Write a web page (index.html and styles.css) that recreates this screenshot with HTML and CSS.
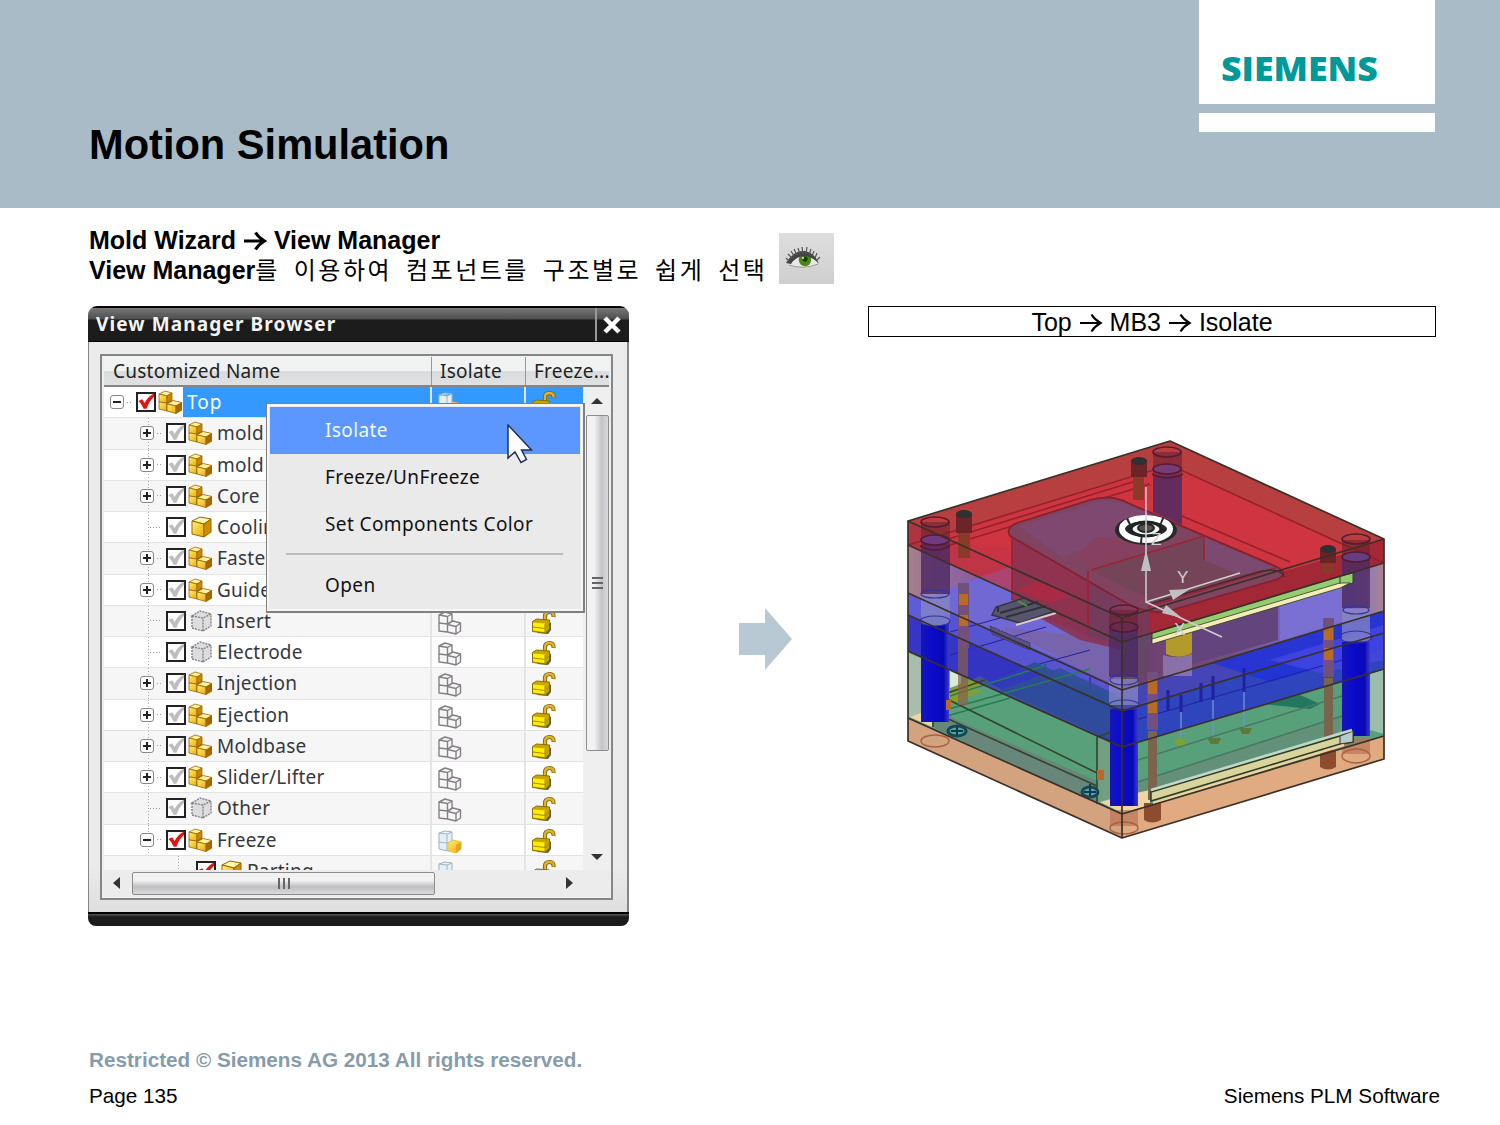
FILE: index.html
```html
<!DOCTYPE html>
<html lang="ko">
<head>
    <meta charset="UTF-8">
    <meta name="viewport" content="width=device-width, initial-scale=1.0">
    <title>Motion Simulation</title>
    <link rel="stylesheet" href="styles.css">
</head>
<body>
    <svg class="defs" width="0" height="0">
        <defs>
            <linearGradient id="gold" x1="0" y1="0" x2="1" y2="1">
                <stop offset="0" stop-color="#fff27a"/>
                <stop offset="1" stop-color="#eda800"/>
            </linearGradient>
        </defs>
        <symbol id="check" viewBox="0 0 20 20">
            <path d="M1.500 9.500 L5.500 7.500 L8 11.500 Q12 4 18 1.500 L18 5 Q12.500 10 10 17.500 L7 17.500 Q5 12.500 1.500 9.500Z"/>
        </symbol>
        <symbol id="boxes" viewBox="0 0 24 24">
            <g stroke="#9a6500" stroke-width=".8" stroke-linejoin="round">
                <path fill="#fff3a0" d="M1 4 L7 1 L14 3 L9 6Z"/>
                <path fill="url(#gold)" d="M1 4 L9 6 V13 L1 12Z"/>
                <path fill="#c98800" d="M9 6 L14 3 V10 L9 13Z"/>
                <path fill="url(#gold)" d="M1 12 L9 13 V21 L1 19Z"/>
                <path fill="#b97800" d="M9 13 L14 10 V18 L9 21Z"/>
                <path fill="#fff3a0" d="M9 14 L15 10.500 L24 12.500 L18 16Z"/>
                <path fill="url(#gold)" d="M9 14 L18 16 V23.500 L9 21Z"/>
                <path fill="#a86800" d="M18 16 L24 12.500 V20 L18 23.500Z"/>
            </g>
        </symbol>
        <symbol id="box" viewBox="0 0 24 24">
            <g stroke="#9a6500" stroke-width="1" stroke-linejoin="round">
                <path fill="#fff6b0" d="M4 6 L12 2 L23 4 L16 9Z"/>
                <path fill="url(#gold)" d="M4 6 L16 9 V22 L4 19Z"/>
                <path fill="#d08d00" d="M16 9 L23 4 V17 L16 22Z"/>
            </g>
        </symbol>
        <symbol id="empty" viewBox="0 0 24 24">
            <path fill="#dddcde" d="M4 7 L12 2 L23 5 V17 L15 22 L4 19Z"/>
            <path fill="none" stroke="#858287" stroke-width="1.4" stroke-dasharray="2 1" d="M4 7 L12 2 L23 5 L15 9Z M4 7 V19 L15 22 V9 M15 22 L23 17 V5"/>
        </symbol>
        <symbol id="outline" viewBox="0 0 24 24">
            <path fill="#f7f6f7" stroke="#858086" stroke-width="1.400" stroke-linejoin="round" d="M1 4 L7 1 L14 3 L9.500 5.500Z M1 4 L9.500 5.500 V13 L1 12Z M9.500 5.500 L14 3 V10 L9.500 13Z M1 12 L9.500 13 V21 L1 20Z M9.500 13.500 L15 10 L22.500 12 L18 15.500Z M9.500 13.500 L18 15.500 V23 L9.500 21Z M18 15.500 L22.500 12 V20 L18 23Z"/>
        </symbol>
        <symbol id="isolated" viewBox="0 0 24 24">
            <path fill="#e2f0f6" stroke="#9fb4bf" d="M1 3 L7 1 L14 2 V18 L9 21 L1 19Z M1 3 L9 4 L14 2 M9 4 V21 M1 12 L9 13 L14 11"/>
            <path fill="url(#gold)" stroke="#eebd45" d="M10 13 L15 10 L23 12 V19 L18 23 L10 21Z"/>
            <path fill="#e9a41d" d="M18 15 L23 12 V19 L18 23Z"/>
        </symbol>
        <symbol id="lock" viewBox="0 0 26 26">
            <path fill="none" stroke="#7d6200" stroke-width="4.200" d="M14 13 V7 Q14 3 18.500 3 Q23 3 22.500 8"/>
            <path fill="none" stroke="#dfb32f" stroke-width="2.400" d="M14 13 V7 Q14 3 18.500 3 Q23 3 22.500 7.500"/>
            <path fill="#5c5b4c" d="M6 24 L17 25 L20 21 V14 L17 12Z"/>
            <path fill="#c9a500" stroke="#8a7000" d="M1.500 12.500 L5.500 10 L18.500 11 V20 L14.500 24 L1.500 22.500Z"/>
            <path fill="#ffef00" d="M2 13.500 L14 14.500 V23 L2 21.500Z"/>
            <path stroke="#a88c00" d="M2 18 L14 19.500 L18 16 M14 15 V24" fill="none"/>
        </symbol>
        <symbol id="to" viewBox="0 0 24 20">
            <path fill="none" stroke="currentColor" d="M1 10 H21 M12.500 1.500 Q15.500 6.500 21.500 10 Q15.500 13.500 12.500 18.500"/>
        </symbol>
    </svg>

    <header class="banner">
        <h1>Motion Simulation</h1>
        <div class="brand">
            <div class="logo"><span>SIEMENS</span></div>
            <div class="logo-bar"></div>
        </div>
    </header>

    <main>
        <section class="intro">
            <div class="intro-text">
                <p>Mold Wizard <svg class="to bold"><use href="#to"/></svg> View Manager</p>
                <p>View Manager<span class="korean">를 이용하여 컴포넌트를 구조별로 쉽게 선택</span></p>
            </div>
            <div class="eye">
                <svg width="55" height="51" viewBox="0 0 55 51">
                    <path d="M8 31 Q16 21 26 21 Q35 21 40 30 Q34 35 25 34 Q15 34 8 31Z" fill="#e8e8e8"/>
                    <path d="M10 32 Q24 37 39 31" fill="none" stroke="#999"/>
                    <circle cx="26" cy="27" r="6.200" fill="#4d8718"/>
                    <circle cx="26" cy="26" r="2.600" fill="#1c3a0a"/>
                    <circle cx="24" cy="25" r="1" fill="#dfe"/>
                    <path d="M7 30 Q15 17 26 18 Q36 20 40 31 Q34 24 26 23 Q17 23 12 31Z" fill="#444"/>
                    <path d="M10 28 L7 25 M13 25 L9 21 M15 23 L12 18 M18 22 L15 16 M21 21 L19 15 M24 21 L23 14 M27 21 L28 14 M30 22 L32 16 M33 23 L35 18 M36 25 L38 20 M38 27 L41 24" stroke="#555" stroke-width="1.200"/>
                </svg>
            </div>
        </section>

        <section class="stage">
            <div class="dialog">
                <div class="titlebar">
                    <span>View Manager Browser</span>
                    <div class="close">
                        <svg width="20" height="20" viewBox="0 0 20 20"><path d="M3 3 L17 17 M17 3 L3 17" stroke="#fff" stroke-width="4.500"/></svg>
                    </div>
                </div>
                <div class="dialog-body">
                    <div class="panel">
                        <div class="thead">
                            <div class="col-name">Customized Name</div>
                            <div class="col-isolate">Isolate</div>
                            <div class="col-freeze">Freeze...</div>
                        </div>
                        <div class="scroll-area">
                            <div class="rows" id="rows"></div>
                            <div class="vscroll">
                                <svg width="12" height="6"><path d="M0 6 L6 0 L12 6Z" fill="#333"/></svg>
                                <div class="vthumb"><i></i><i></i><i></i></div>
                                <svg width="12" height="6"><path d="M0 0 L6 6 L12 0Z" fill="#333"/></svg>
                            </div>
                        </div>
                        <div class="hscroll">
                            <svg width="7" height="12"><path d="M7 0 L0 6 L7 12Z" fill="#333"/></svg>
                            <div class="hthumb"><i></i><i></i><i></i></div>
                            <svg width="7" height="12"><path d="M0 0 L7 6 L0 12Z" fill="#333"/></svg>
                        </div>
                    </div>
                </div>
                <div class="dialog-foot"></div>

                <div class="menu">
                    <div class="menu-item active">Isolate</div>
                    <div class="menu-item">Freeze/UnFreeze</div>
                    <div class="menu-item">Set Components Color</div>
                    <hr>
                    <div class="menu-item">Open</div>
                </div>
                <svg class="pointer" width="28" height="42" viewBox="0 0 28 42">
                    <path d="M2 1 V34 L9 28 L15 38.500 L20.500 35.500 L15.500 26 H25.500Z" fill="#fff" stroke="#20305a" stroke-width="1.500"/>
                </svg>
            </div>

            <svg class="arrow" width="53" height="62" viewBox="0 0 53 62"><path d="M0 15 H26 V0 L53 31 L26 62 V47 H0Z" fill="#b9c9d4"/></svg>

            <div class="result">
                <div class="caption">Top <svg class="to"><use href="#to"/></svg> MB3 <svg class="to"><use href="#to"/></svg> Isolate</div>
                <svg class="model" width="490" height="410" viewBox="900 435 490 410">
                    <defs>
                        <linearGradient id="pillar">
                            <stop offset="0" stop-color="#1616b4"/>
                            <stop offset=".3" stop-color="#0c0ccc"/>
                            <stop offset=".8" stop-color="#0808b8"/>
                            <stop offset="1" stop-color="#3c3cc8"/>
                        </linearGradient>
                        <linearGradient id="leftMid" gradientUnits="userSpaceOnUse" x1="908" y1="0" x2="1122" y2="0">
                            <stop offset="0" stop-color="#a8808e"/>
                            <stop offset=".2" stop-color="#9168a0"/>
                            <stop offset=".45" stop-color="#8a4f92"/>
                            <stop offset=".7" stop-color="#8c3560"/>
                            <stop offset="1" stop-color="#67365f"/>
                        </linearGradient>
                        <linearGradient id="rightMid" gradientUnits="userSpaceOnUse" x1="1122" y1="0" x2="1384" y2="0">
                            <stop offset="0" stop-color="#6b3d70"/>
                            <stop offset=".4" stop-color="#735078"/>
                            <stop offset=".6" stop-color="#7a62b4"/>
                            <stop offset=".88" stop-color="#7d70c4"/>
                            <stop offset="1" stop-color="#aa8494"/>
                        </linearGradient>
                    </defs>

                    <!-- plate side faces, top to bottom -->
                    <path fill="#ae3442" d="M908 521 L1122 618 V642 L908 545Z"/>
                    <path fill="#a52637" d="M1122 618 L1384 539 V563 L1122 642Z"/>
                    <path fill="url(#leftMid)" d="M908 545 L1122 642 V690 L908 593Z"/>
                    <path fill="url(#rightMid)" d="M1122 642 L1384 563 V611 L1122 690Z"/>
                    <path fill="#5f5cd8" d="M908 593 L1122 690 V711 L908 615Z"/>
                    <path fill="#4645b6" d="M1122 690 L1384 611 V633 L1122 711Z"/>
                    <path fill="#3535c6" d="M908 615 L1122 711 V747 L908 651Z"/>
                    <path fill="#2e45bd" d="M1122 711 L1384 633 V669 L1122 747Z"/>
                    <path fill="#58a079" d="M908 651 L1122 747 V814 L908 718Z"/>
                    <path fill="#57a079" d="M1122 747 L1384 669 V736 L1122 814Z"/>
                    <path fill="#d3a27f" d="M908 718 L1122 814 V838 L908 741Z"/>
                    <path fill="#e0ab80" d="M1122 814 L1384 736 V759 L1122 838Z"/>

                    <!-- inside of the blue plates -->
                    <path fill="#7069d4" d="M958 585 L1012 566 V605 L1122 650 V690 L925 601Z"/>
                    <path fill="#5452ce" opacity=".8" d="M945 610 L1050 655 L1122 688 V711 L940 629Z"/>
                    <path fill="#7b63a2" opacity=".8" d="M1000 627 L1122 640 V690Z"/>
                    <path fill="#1c2fe0" opacity=".7" d="M1212 663 L1384 611 V650 L1270 682Z"/>
                    <path fill="#4a4ae6" opacity=".7" d="M1270 660 L1384 625 V660 L1320 673Z"/>
                    <path fill="#7a6fd2" d="M1280 597 L1340 580 V622 L1280 641Z"/>
                    <path fill="#64447c" d="M1192 630 L1278 604 V640 L1192 664Z"/>
                    <g fill="none" stroke="#2320a0">
                        <path d="M950 655 L1046 627 M1000 675 L1090 650 M1045 664 V683 M1090 677 V702 M1122 724 L1342 660 M950 632 L1050 604"/>
                        <path stroke-width="3" d="M1168 690 V711 M1181 695 V712 M1201 683 V702 M1213 676 V700 M1244 668 V692"/>
                    </g>

                    <!-- ejector space -->
                    <path fill="#a9bdab" d="M909 653 L932 663 V726 L909 717Z"/>
                    <path fill="#d8ead8" d="M950 671 L961 676 V684 L950 688Z"/>
                    <path fill="#849f30" d="M944 692 L980 676 L996 685 L951 704Z"/>
                    <path fill="#2f4f96" d="M984 684 L1035 662 L1122 703 V742 L1097 737Z"/>
                    <path fill="#58a079" d="M975 688 L986 682 L1100 735 L1097 745Z"/>
                    <path fill="#3434c2" d="M960 640 L1122 711 V747 L960 674Z" opacity=".75"/>
                    <path fill="#2f4f96" d="M1000 690 L1060 668 L1122 697 V745Z" opacity=".85"/>
                    <path fill="#68877b" d="M934 708 L957 720 L1097 781 V803 L934 728Z"/>
                    <path fill="#729f82" d="M1098 738 L1122 747 V808 L1098 802Z"/>
                    <path fill="#678b78" opacity=".75" d="M1122 787 L1340 716 V731 L1151 790 L1122 797Z"/>
                    <path fill="#23765f" d="M1263 704 L1300 695 L1320 704 L1310 709Z"/>
                    <path fill="#9bbdab" d="M1370 674 L1384 669 V734 L1370 730Z"/>
                    <path fill="#efd5a5" d="M1100 802 L1122 796 L1150 790 V805 L1122 813Z M910 717 L932 709 V727Z"/>
                    <g fill="none" stroke="#287b55" stroke-width="1.500">
                        <path d="M950 696 L1047 665 M945 710 L1090 669 M940 718 L1010 698"/>
                        <path stroke="#4b7764" d="M1122 765 L1342 696 M1122 787 L1342 716"/>
                    </g>
                    <path fill="none" stroke="#35442e" stroke-width="1.600" d="M933 661 V727 M1097 737 V804 M943 697 L1097 773 M935 713 L1097 786 M1097 737 L1122 728 M936 697 L985 680"/>
                    <path fill="none" stroke="#6d90d6" stroke-width="2" opacity=".7" d="M1181 712 V738 M1213 700 V735 M1244 692 V727"/>
                    <g fill="#5a7b3b">
                        <ellipse cx="1180" cy="742" rx="6" ry="3.500" fill="#79a338"/>
                        <path d="M1207 738 H1221 L1218 744 H1211Z M1239 728 H1252 L1249 734 H1242Z"/>
                    </g>
                    <g fill="#5d9cac" stroke="#124953" stroke-width="3">
                        <ellipse cx="957" cy="731" rx="9" ry="5"/>
                        <ellipse cx="1090" cy="792" rx="8" ry="5"/>
                    </g>
                    <path stroke="#103d45" stroke-width="2" d="M951 731 H963 M957 727 V735 M1084 792 H1096 M1090 784 V796"/>

                    <!-- top plate -->
                    <path fill="#b83f40" d="M908 521 L1170 441 L1384 539 L1122 618Z"/>
                    <path fill="#ce3541" d="M918 541 L1170 465 L1358 550 L1122 618 L953 542Z"/>
                    <path fill="#c63448" d="M953 543 L1012 548 V592 L935 556Z" opacity=".7"/>
                    <path fill="#a32a36" opacity=".55" d="M1160 612 L1384 544 V563 L1160 630Z"/>
                    <g fill="none" stroke="#94222a" stroke-width="1.600">
                        <path d="M908 545 L1170 465 L1384 563 M945 540 L1139 480 M950 545 L1150 484 M1182 516 L1290 562"/>
                    </g>

                    <!-- cavity block -->
                    <path fill="#8a3352" opacity=".9" d="M1012 538 L1122 587 V650 L1080 640 L1012 603Z"/>
                    <path fill="#6f3d60" opacity=".8" d="M1090 573 L1150 600 V656 L1088 636Z"/>
                    <path fill="#804360" stroke="#85202e" stroke-width="1.700" d="M1010 536 Q1005 528 1017 523 L1090 500 Q1112 494 1128 503 L1275 566 Q1292 574 1275 580 L1165 612 Q1145 613 1128 604Z"/>
                    <path fill="#7d4a74" opacity=".8" d="M1018 526 L1093 503 Q1110 498 1126 504 L1162 520 L1093 546 L1062 557Z"/>
                    <path fill="#874160" d="M1074 555 Q1088 546 1096 537 Q1120 536 1150 546 L1093 570Z"/>
                    <path fill="#744558" d="M1091 570 L1150 552 L1200 537 L1274 570 L1160 603 L1122 586Z"/>
                    <path fill="#7c4a70" d="M1204 537 L1275 568 L1240 575 L1204 560Z"/>
                    <path fill="none" stroke="#9d2335" stroke-width="1.700" d="M1012 538 V600 M1088 571 V630 M1091 570 L1204 536 M1148 607 L1275 568 M1204 537 V560"/>
                    <path fill="none" stroke="#4a2830" stroke-width="1.500" d="M1150 604 L1262 571 Q1282 568 1284 577"/>
                    <path fill="#634765" d="M1122 642 L1150 633 V672 L1122 688Z"/>

                    <!-- slider on the left side -->
                    <path fill="#a92a45" d="M1017 590 L1040 580 L1070 595 L1050 603Z"/>
                    <path fill="#57546c" stroke="#32363a" stroke-width="1.500" d="M992 615 L996 607 L1024 598 L1055 611 L1020 623Z"/>
                    <path fill="none" stroke="#2f3238" stroke-width="2" d="M1000 613 L1038 602 M1006 617 L1046 606 M998 607 V612"/>
                    <path stroke="#dac8cf" stroke-width="2" d="M1016 625 L1056 613"/>
                    <path stroke="#4b9544" stroke-width="2" d="M1018 601 L1027 606"/>
                    <path fill="#584f8b" stroke="#343750" stroke-dasharray="2 1" d="M990 626 L1030 643 V650 L992 634Z"/>

                    <!-- guide pillars -->
                    <g fill="#4d2a64" opacity=".82">
                        <path d="M921 544 H950 V594 H921Z"/>
                        <path d="M1153 475 H1182 V525 L1153 512Z"/>
                        <path d="M1342 558 H1370 V608 H1342Z"/>
                        <path d="M1109 630 H1138 V677 H1109Z"/>
                    </g>
                    <path fill="#6c2030" opacity=".6" d="M921 522 H950 V546 H921Z M1153 452 H1182 V475 H1153Z M1342 540 H1370 V560 H1342Z M1109 610 H1138 V632 H1109Z"/>
                    <g fill="#8787c4" opacity=".75">
                        <path d="M921 594 H950 V620 H921Z"/>
                        <path d="M1342 609 H1370 V641 H1342Z"/>
                        <path d="M1109 679 H1138 V705 H1109Z"/>
                    </g>
                    <g fill="url(#pillar)">
                        <path d="M921 622 H949 V722 H921Z"/>
                        <path d="M1110 709 H1138 V806 H1110Z"/>
                        <path d="M1342 642 H1370 V736 H1342Z"/>
                    </g>
                    <g fill="none" stroke="#551b31" stroke-width="1.600">
                        <ellipse cx="935" cy="522" rx="14" ry="5"/>
                        <ellipse cx="935" cy="540" rx="14" ry="5" fill="#703c7f"/>
                        <ellipse cx="1167" cy="452" rx="14" ry="5"/>
                        <ellipse cx="1167" cy="469" rx="14" ry="5" fill="#773b75"/>
                        <path d="M1152 474 Q1167 482 1183 474 M920 546 Q935 554 950 546"/>
                        <ellipse cx="1356" cy="539" rx="14" ry="5"/>
                        <ellipse cx="1356" cy="557" rx="14" ry="5" fill="#663d80"/>
                        <ellipse cx="1124" cy="610" rx="14" ry="5"/>
                        <ellipse cx="1124" cy="627" rx="14" ry="5" fill="#6c294f"/>
                    </g>
                    <g fill="none" stroke="#3434a0" stroke-width="1.200">
                        <ellipse cx="935" cy="594" rx="14" ry="4"/>
                        <ellipse cx="935" cy="621" rx="15" ry="5" fill="#777bc4"/>
                        <ellipse cx="1124" cy="680" rx="14" ry="5"/>
                        <ellipse cx="1124" cy="705" rx="15" ry="5"/>
                        <ellipse cx="1356" cy="610" rx="13" ry="4"/>
                        <ellipse cx="1356" cy="637" rx="16" ry="6"/>
                    </g>
                    <path fill="#b97053" opacity=".65" d="M1110 810 H1138 V826 H1110Z M1342 738 H1370 V754 H1342Z"/>
                    <g fill="none" stroke="#a76244" stroke-width="1.400">
                        <ellipse cx="935" cy="741" rx="14" ry="6"/>
                        <ellipse cx="1124" cy="828" rx="14" ry="6"/>
                        <ellipse cx="1356" cy="756" rx="14" ry="7"/>
                    </g>

                    <!-- screws -->
                    <g fill="#8b3a29">
                        <path d="M958 527 H970 V558 H958Z M1133 474 H1144 V500 H1133Z M1322 556 H1334 V573 H1322Z"/>
                        <path fill="#6c2429" d="M956 513 H972 V533 H956Z M1131 460 H1147 V477 H1131Z M1320 549 H1336 V563 H1320Z"/>
                    </g>
                    <g fill="#302f32">
                        <ellipse cx="964" cy="514" rx="8" ry="4"/>
                        <ellipse cx="1139" cy="461" rx="8" ry="4"/>
                        <ellipse cx="1328" cy="549" rx="8" ry="4"/>
                    </g>
                    <path fill="#71507e" d="M958 583 H969 V648 H958Z M1323 618 H1334 V677 H1323Z M1147 672 H1158 V730 H1147Z"/>
                    <path fill="#b66c26" d="M959 594 H968 V605 H959Z M959 615 H968 V626 H959Z M1324 628 H1333 V640 H1324Z M1324 648 H1333 V660 H1324Z M1148 680 H1157 V694 H1148Z M1148 702 H1157 V713 H1148Z M946 700 H951 V710 H946Z M1097 770 H1104 V780 H1097Z"/>
                    <path fill="#8a6049" d="M958 648 H968 V705 H958Z" opacity=".7"/>
                    <path fill="#79654b" d="M1148 731 H1157 V800 H1148Z M1324 678 H1333 V748 H1324Z"/>
                    <path fill="#8c4c2d" d="M1144 803 H1161 V820 Q1152 825 1144 820Z M1320 750 H1336 V767 Q1328 772 1320 767Z"/>
                    <path fill="#b49a2a" d="M1166 637 L1192 629 V653 Q1179 660 1166 654Z"/>
                    <path fill="#8e79b0" opacity=".85" d="M1163 655 Q1178 660 1192 654 V676 H1163Z"/>

                    <!-- interlocks -->
                    <path fill="#94cc70" stroke="#303a25" d="M1152 633 L1340 576 L1353 573 V583 L1152 641Z"/>
                    <path fill="#f4edb8" stroke="#303a25" stroke-width=".8" d="M1152 639 L1340 583 L1350 583 L1340 588 L1152 644Z"/>
                    <path fill="none" stroke="#303a25" d="M1340 576 V584"/>
                    <path fill="#d8d49b" stroke="#303a25" stroke-width="1.500" d="M1151 792 L1340 736 L1353 731 V742 L1340 744 L1151 801Z"/>
                    <path fill="#b9c9cc" stroke="#303a25" d="M1340 736 L1353 731 V742 L1340 744Z"/>
                    <path fill="none" stroke="#c3d6ca" stroke-width="2.500" d="M1151 790 L1352 730"/>
                    <path fill="none" stroke="#f0d2a0" stroke-width="2.500" d="M1153 803 L1344 745"/>

                    <!-- plate edges -->
                    <g fill="none" stroke="#3b3027" stroke-width="1.700" stroke-linejoin="round">
                        <path d="M908 521 L1170 441 L1384 539 V759 L1122 838 L908 741Z"/>
                        <path d="M908 521 L1122 618 L1384 539 M1122 618 V838"/>
                        <path d="M908 545 L1122 642 L1384 563"/>
                        <path d="M908 593 L1122 690 L1384 611"/>
                        <path d="M908 615 L1122 711 L1384 633"/>
                        <path d="M908 651 L1122 747 L1384 669"/>
                        <path d="M908 718 L1122 814 L1384 736"/>
                    </g>

                    <!-- locating ring -->
                    <ellipse cx="1146" cy="530" rx="31" ry="15" fill="#262a2b"/>
                    <ellipse cx="1146" cy="529" rx="24" ry="11" fill="none" stroke="#fff" stroke-width="6" stroke-dasharray="32 2"/>
                    <ellipse cx="1146" cy="529" rx="15" ry="7" fill="#eef4f0" stroke="#1b2424" stroke-width="3"/>
                    <ellipse cx="1146" cy="528" rx="8" ry="4" fill="#53554b" stroke="#202525" stroke-width="2"/>

                    <!-- axes -->
                    <path fill="none" stroke="#d2cdd0" stroke-width="1.500" d="M1146 487 V602 L1240 573 M1146 602 L1222 637"/>
                    <path fill="#c0bfc2" d="M1146 550 L1141 571 H1151Z M1190 589 L1169 590 L1173 600Z M1182 618 L1166 605 L1162 613Z"/>
                    <g class="axis">
                        <text x="1151" y="545">Z</text>
                        <text x="1177" y="583">Y</text>
                        <text x="1174" y="635">X</text>
                    </g>
                </svg>
            </div>
        </section>
    </main>

    <footer>
        <p class="restricted">Restricted © Siemens AG 2013 All rights reserved.</p>
        <div class="footline">
            <span>Page 135</span>
            <span>Siemens PLM Software</span>
        </div>
    </footer>

    <script>
        // level, expander, checked, icon, label, isolate icon
        const rows = [
            [0, "-", true, "boxes", "Top", "isolated"],
            [1, "+", false, "boxes", "mold", "outline"],
            [1, "+", false, "boxes", "mold", "outline"],
            [1, "+", false, "boxes", "Core", "outline"],
            [1, "", false, "box", "Cooling", "outline"],
            [1, "+", false, "boxes", "Fasteners", "outline"],
            [1, "+", false, "boxes", "Guide", "outline"],
            [1, "", false, "empty", "Insert", "outline"],
            [1, "", false, "empty", "Electrode", "outline"],
            [1, "+", false, "boxes", "Injection", "outline"],
            [1, "+", false, "boxes", "Ejection", "outline"],
            [1, "+", false, "boxes", "Moldbase", "outline"],
            [1, "+", false, "boxes", "Slider/Lifter", "outline"],
            [1, "", false, "empty", "Other", "outline"],
            [1, "-", true, "boxes", "Freeze", "isolated"],
            [2, "", true, "box", "Parting", "isolated"]
        ];

        const container = document.getElementById("rows");

        rows.forEach(([level, expander, checked, icon, label, isolate]) => {
            const row = document.createElement("div");
            row.className = "row level-" + level + (level === 0 ? " selected" : "");
            const toggle = expander
                ? `<span class="toggle ${expander === "+" ? "plus" : ""}"></span><span class="dots"></span>`
                : `<span class="dots leaf"></span>`;
            row.innerHTML = `
                <div class="cell-name">
                    ${toggle}
                    <span class="checkbox ${checked ? "checked" : ""}"><svg width="19" height="19"><use href="#check"/></svg></span>
                    <svg class="node" width="24" height="24"><use href="#${icon}"/></svg>
                    <span class="label">${label}</span>
                </div>
                <div class="cell-isolate"><svg width="24" height="24"><use href="#${isolate}"/></svg></div>
                <div class="cell-freeze"><svg width="26" height="26"><use href="#lock"/></svg></div>`;
            container.appendChild(row);
        });
    </script>
</body>
</html>
```
FILE: styles.css
```css
* {
    box-sizing: border-box;
}

body {
    margin: 0;
    width: 1500px;
    height: 1125px;
    overflow: hidden;
    display: flex;
    flex-direction: column;
    background-color: #fff;
    color: #000;
    font-family: "Liberation Sans", Arial, sans-serif;
}

p, h1 {
    margin: 0;
}

svg {
    display: block;
    flex-shrink: 0;
}

.defs {
    position: absolute;
}

.banner {
    display: flex;
    justify-content: space-between;
    height: 208px;
    padding: 0 65px 0 89px;
    background-color: #aabbc8;
}

h1 {
    padding-top: 121px;
    font-size: 41.600px;
    line-height: 48px;
}

.brand {
    width: 236px;
}

.logo {
    height: 104px;
    padding: 46px 0 0 22px;
    background-color: #fff;
    color: #009999;
    font-family: "Open Sans", sans-serif;
    font-size: 33px;
    font-weight: 800;
    line-height: 46px;
}

.logo span {
    display: inline-block;
    transform: scaleX(1.08);
    transform-origin: left;
}

.logo-bar {
    height: 19px;
    margin-top: 9px;
    background-color: #fff;
}

main {
    flex: 1;
    padding: 17px 64px 0 88px;
}

.intro {
    display: flex;
    height: 81px;
    padding-left: 1px;
}

.intro-text {
    width: 690px;
    font-size: 25px;
    font-weight: bold;
    line-height: 30px;
    white-space: nowrap;
}

.korean {
    font-family: "Noto Sans CJK KR", sans-serif;
    font-size: 24px;
    font-weight: 400;
    line-height: 1;
    letter-spacing: 2.500px;
    word-spacing: 4.700px;
}

.to {
    display: inline-block;
    width: 24px;
    height: 20px;
    stroke-width: 2.200;
    vertical-align: -2px;
}

.to.bold {
    stroke-width: 3;
}

.eye {
    width: 55px;
    height: 51px;
    margin-top: 8px;
    background: linear-gradient(#dedede, #cfcfcf);
}

.stage {
    display: flex;
    align-items: flex-start;
}

/* dialog window */

.dialog {
    position: relative;
    width: 541px;
    height: 620px;
    border-radius: 9px 9px 8px 8px;
    overflow: hidden;
    display: flex;
    flex-direction: column;
    font-family: "Noto Sans", sans-serif;
    font-size: 19px;
    color: #36383e;
}

.titlebar {
    display: flex;
    justify-content: space-between;
    height: 36px;
    padding-left: 8px;
    border-top: 2px solid #050505;
    border-bottom: 1px solid #000;
    background: linear-gradient(#777 0, #4e4e50 11px, #1c1c1c 12px);
    color: #f4f4f4;
    font-weight: bold;
    line-height: 32px;
    letter-spacing: 1.120px;
}

.close {
    width: 34px;
    padding: 7px 0 0 5px;
    border-left: 2px solid #999;
}

.dialog-body {
    flex: 1;
    padding: 12px 14px 12px 11px;
    border: solid #858585;
    border-width: 0 2px 0 1px;
    background: linear-gradient(#ebebeb 92%, #dedede);
}

.dialog-foot {
    height: 14px;
    border-top: 2px solid #000;
    background: linear-gradient(#555, #1b1b1b 3px);
}

.panel {
    height: 546px;
    padding: 1px 2px;
    border: 2px solid #868686;
    background-color: #eee;
}

.thead {
    display: flex;
    height: 30px;
    border-bottom: 2px solid #858585;
    background: linear-gradient(#f1f3f3 50%, #d9dcdd 52%, #dfe1e2);
    color: #222;
    line-height: 28px;
    letter-spacing: .250px;
    white-space: nowrap;
}

.col-name {
    width: 327px;
    padding-left: 9px;
    flex-shrink: 0;
}

.col-isolate,
.col-freeze {
    flex-shrink: 0;
    width: 94px;
    padding-left: 8px;
    border-left: 1px solid #999;
}

.col-freeze {
    width: 84px;
}

.scroll-area {
    display: flex;
    height: 483px;
}

.rows {
    width: 480px;
    overflow: hidden;
}

.row {
    display: flex;
    height: 31.25px;
    border-bottom: 1px solid #e3e3e3;
    background-color: #fff;
}

.row:nth-child(even) {
    background-color: #f6f6f6;
}

.cell-name {
    display: flex;
    align-items: center;
    width: 327px;
    padding-left: 36px;
}

.level-0 .cell-name {
    padding-left: 6px;
}

.level-1 .cell-name {
    background: repeating-linear-gradient(#aaa 0 1px, transparent 1px 3px) 44px 0 / 1px 100% no-repeat;
}

.level-2 .cell-name {
    padding-left: 92px;
    background: repeating-linear-gradient(#aaa 0 1px, transparent 1px 3px) 74px 0 / 1px 100% no-repeat;
}

.level-2 .dots {
    display: none;
}

.toggle {
    width: 14px;
    height: 14px;
    border: 1px solid #888;
    border-radius: 3px;
    background: linear-gradient(#222, #222) center / 8px 2px no-repeat, #fff;
}

.toggle.plus {
    background: linear-gradient(#222, #222) center / 8px 2px no-repeat, linear-gradient(#222, #222) center / 2px 8px no-repeat, #fff;
}

.dots {
    width: 5px;
    height: 1px;
    margin: 0 4px 0 3px;
    background: repeating-linear-gradient(90deg, #999 0 1px, transparent 1px 3px);
}

.dots.leaf {
    width: 12px;
    margin: 0 4px 0 10px;
}

.checkbox {
    width: 20px;
    height: 20px;
    border: 2px solid #222;
    background-color: #fff;
    fill: #bdbdbd;
}

.checkbox svg {
    margin: -2px 0 0 -1px;
}

.checkbox.checked {
    fill: #e51313;
}

.node {
    margin-left: 2px;
}

.label {
    flex: 1;
    height: 30px;
    margin-left: 1px;
    padding-left: 4px;
    line-height: 31px;
    letter-spacing: .250px;
}

.level-0 .label {
    letter-spacing: 1px;
}

.cell-isolate,
.cell-freeze {
    width: 94px;
    padding: 5px 0 0 6px;
    border-left: 2px solid #e5e5e5;
}

.cell-freeze {
    width: 59px;
    padding: 3px 0 0 5px;
}

.selected .label,
.selected .cell-isolate,
.selected .cell-freeze {
    background-color: #3399ff;
    color: #fff;
}

.vscroll {
    display: flex;
    flex-direction: column;
    align-items: center;
    justify-content: space-between;
    width: 26px;
    height: 100%;
    padding: 11px 0 10px 2px;
    background-color: #efefef;
}

.vthumb,
.hthumb {
    display: flex;
    align-items: center;
    justify-content: center;
    gap: 3px;
    border: 1px solid #8c8c8c;
    border-radius: 2px;
}

.vthumb {
    flex-direction: column;
    width: 23px;
    height: 336px;
    margin: 11px 0 auto;
    background: linear-gradient(90deg, #f2f2f2 35%, #c4c4c8 70%, #dadadc);
}

.vthumb i {
    width: 11px;
    height: 2px;
    background-color: #666;
}

.hscroll {
    display: flex;
    align-items: center;
    height: 26px;
    padding: 0 36px 0 9px;
    background-color: #ececec;
}

.hthumb {
    width: 303px;
    height: 23px;
    margin: 0 auto 0 12px;
    background: linear-gradient(#f2f2f2 35%, #bfbfc2 65%, #dadadc);
}

.hthumb i {
    width: 2px;
    height: 11px;
    background-color: #666;
}

/* context menu over the tree */

.menu {
    position: absolute;
    left: 178px;
    top: 97px;
    width: 319px;
    height: 210px;
    padding: 3px;
    border: 1px solid #808080;
    border-width: 1px 2px 2px 1px;
    background-color: #eaeaea;
    box-shadow: inset 0 0 0 2px #f6f6f6;
    color: #111;
}

.menu-item {
    height: 47px;
    padding-left: 55px;
    line-height: 46px;
    letter-spacing: .4px;
}

.menu-item.active {
    background-color: #5c96ff;
    color: #f5f8ff;
}

.menu hr {
    height: 2px;
    margin: 5px 17px 7px 16px;
    border: 0;
    background-color: #bdbdbd;
}

.pointer {
    position: absolute;
    left: 418px;
    top: 118px;
}

.arrow {
    margin: 302px 0 0 110px;
}

.result {
    margin-left: 76px;
    width: 568px;
}

.caption {
    height: 31px;
    border: 1px solid #000;
    font-size: 25px;
    line-height: 31px;
    text-align: center;
}

.model {
    margin: 98px 0 0 32px;
}

.axis {
    fill: #d5ced3;
    font-size: 17px;
}

footer {
    height: 80px;
    padding: 3px 60px 0 89px;
    font-size: 20.700px;
    line-height: 24px;
}

.restricted {
    color: #869caa;
    font-weight: bold;
}

.footline {
    display: flex;
    justify-content: space-between;
    margin-top: 12px;
}
```
